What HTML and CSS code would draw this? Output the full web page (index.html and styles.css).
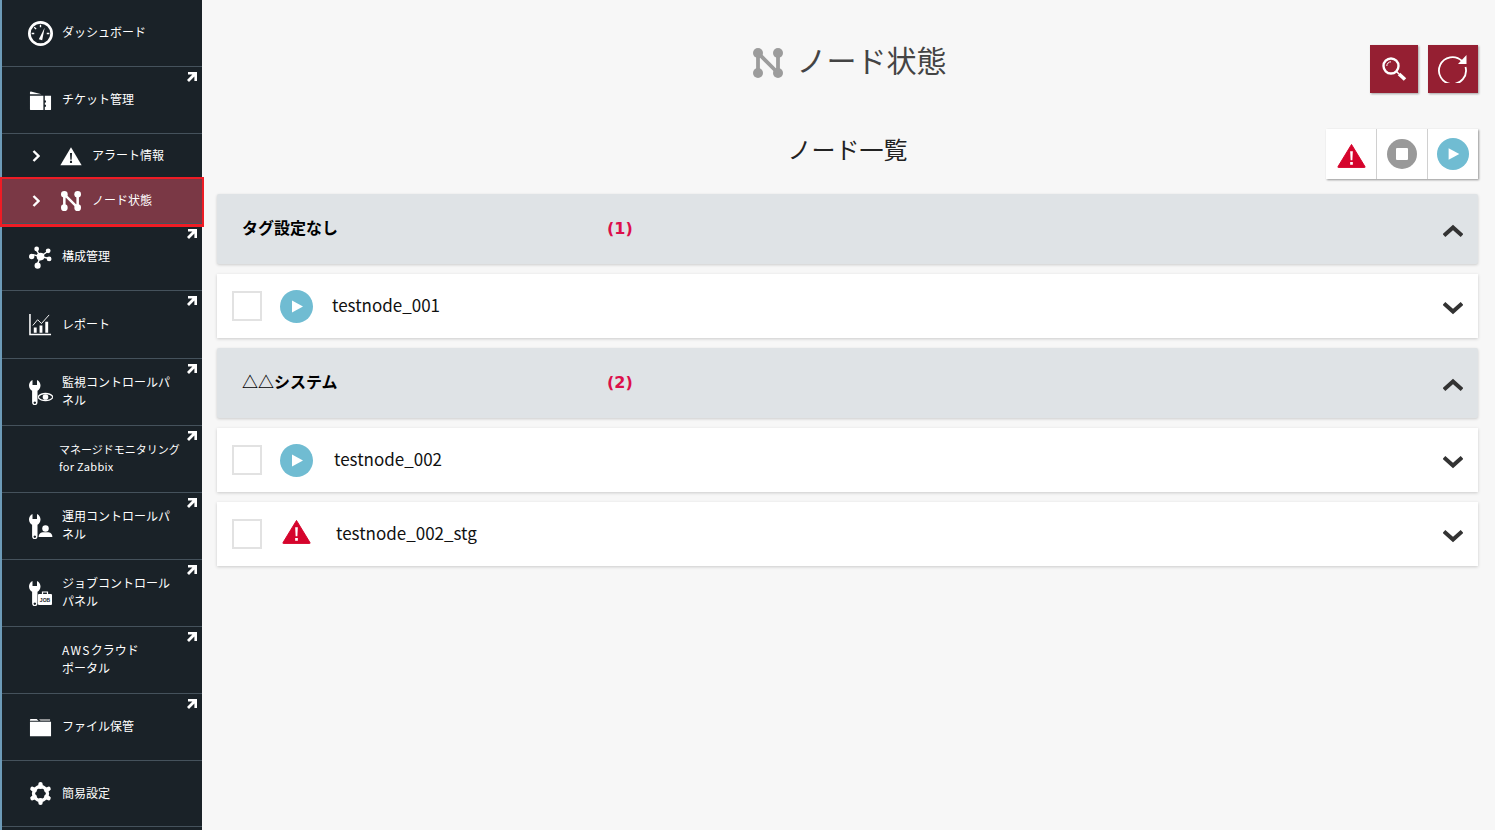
FILE: index.html
```html
<!DOCTYPE html>
<html lang="ja">
<head>
  <meta charset="UTF-8">
  <title>ノード状態</title>
  <meta name="viewport" content="width=device-width, initial-scale=1">
  <link rel="stylesheet" href="styles.css">
</head>
<body>
  <svg class="defs" width="0" height="0">
    <symbol id="ext" viewBox="0 0 10 10"><path d="M1 0h9v9H7.400V4.600L2 10 0 8 5.400 2.600H1z" fill="#fff"/></symbol>
    <symbol id="nodes" viewBox="0 0 30 30">
      <path d="M5 5V25M5 5 25 25M25 5V25" stroke="currentColor" stroke-width="3.800" fill="none"/>
      <circle cx="5" cy="5" r="5" fill="currentColor"/><circle cx="25" cy="5" r="5" fill="currentColor"/>
      <circle cx="5" cy="25" r="5" fill="currentColor"/><circle cx="25" cy="25" r="5" fill="currentColor"/>
    </symbol>
    <symbol id="wrench" viewBox="0 0 12 25"><path fill-rule="evenodd" fill="#fff" d="M3.500 0V5H8V0C10.500 1 11.500 3.500 11.500 5.500 11.500 8 10 10 8.500 10.800V22.500a2.700 2.700 0 0 1-5.400 0V10.800C1.500 10 0 8 0 5.500 0 3.500 1 1 3.500 0ZM5.800 21.500a1.200 1.200 0 1 0 .01 0Z"/></symbol>
    <symbol id="warn" viewBox="0 0 30 26"><path d="M15 1.500 29 24.500a.8.8 0 0 1-.7 1.200H1.700a.8.8 0 0 1-.7-1.200Z" fill="#d5042c" stroke="#d5042c" stroke-linejoin="round"/><path d="M13.600 8.500h2.800l-.5 9.500h-1.800zM13.600 19.700h2.800v3h-2.800z" fill="#fff"/></symbol>
    <symbol id="play" viewBox="0 0 33 33"><circle cx="16.500" cy="16.500" r="16.500" fill="#70bcd2"/><path d="M12 10.500 23 16.500 12 22.500Z" fill="#fff"/></symbol>
    <symbol id="up" viewBox="0 0 20 13"><path d="M1 11.500 10 3.500l9 8" fill="none" stroke="#333" stroke-width="4"/></symbol>
    <symbol id="down" viewBox="0 0 20 13"><path d="M1 1.500 10 9.500l9-8" fill="none" stroke="#333" stroke-width="4"/></symbol>
    <symbol id="chev" viewBox="0 0 8 12"><path d="M1.500 1 6.500 6l-5 5" fill="none" stroke="#fff" stroke-width="2.400"/></symbol>
  </svg>

  <nav class="sidebar">
    <a class="menu-item">
      <svg class="menu-icon gauge" viewBox="0 0 24 24"><circle cx="12" cy="12" r="10.700" fill="none" stroke="#fff" stroke-width="2.600"/><path d="M12 3.500v2.500M3.500 12H6M20.500 12H18M6 6l1.800 1.800" stroke="#fff" stroke-width="1.300"/><path d="M16 6.500 13.600 18.500 10.400 17.600Z" fill="#fff"/></svg>
      <span class="menu-text">ダッシュボード</span>
    </a>
    <a class="menu-item">
      <svg class="ext"><use href="#ext"/></svg>
      <svg class="menu-icon" viewBox="0 0 24 24"><path d="M1 6V3.500a1 1 0 0 1 1-1L13 5.500H1ZM1 7h14v15H2a1 1 0 0 1-1-1ZM16.500 7H23v14a1 1 0 0 1-1 1h-5.500v-3.500h1.200v-2h-1.200v-2.500h1.200v-2h-1.200Z" fill="#fff"/></svg>
      <span class="menu-text">チケット管理</span>
    </a>
    <a class="menu-item sub">
      <svg class="sub-chev"><use href="#chev"/></svg>
      <svg class="sub-icon" viewBox="0 0 30 26"><path d="M15 1 29.500 25.500H.5Z" fill="#fff"/><path d="M13.600 9h2.800l-.5 9h-1.800zM13.600 19.500h2.800v3h-2.800z" fill="#1a2228"/></svg>
      <span class="menu-text">アラート情報</span>
    </a>
    <a class="menu-item sub active">
      <svg class="sub-chev"><use href="#chev"/></svg>
      <svg class="sub-icon node-icon"><use href="#nodes"/></svg>
      <span class="menu-text">ノード状態</span>
    </a>
    <a class="menu-item">
      <svg class="ext"><use href="#ext"/></svg>
      <svg class="menu-icon" viewBox="0 0 24 24"><path d="M12 11 4 9M12 11 19 6M12 11 21 13M12 11 8 21M12 11 7 3" stroke="#fff" stroke-width="1.500"/><circle cx="12" cy="11" r="4" fill="#fff"/><circle cx="2.800" cy="11" r="2.800" fill="#fff"/><circle cx="20" cy="5" r="2.500" fill="#fff"/><circle cx="21" cy="13.500" r="2.500" fill="#fff"/><circle cx="9" cy="20.500" r="3.200" fill="#fff"/><circle cx="8" cy="3" r="2.500" fill="#fff"/></svg>
      <span class="menu-text">構成管理</span>
    </a>
    <a class="menu-item tall">
      <svg class="ext"><use href="#ext"/></svg>
      <svg class="menu-icon" viewBox="0 0 24 24"><path d="M1 1v21.500h22" fill="none" stroke="#fff" stroke-width="1.600"/><path d="M4 13 9 7l4 4 8-9" fill="none" stroke="#fff" stroke-width="1"/><path d="M5 15h3v5.500H5zM11 13h3v7.500h-3zM17 9h3v11.500h-3z" fill="#fff"/></svg>
      <span class="menu-text">レポート</span>
    </a>
    <a class="menu-item">
      <svg class="ext"><use href="#ext"/></svg>
      <span class="menu-icon tool-icon">
        <svg class="tool-wrench"><use href="#wrench"/></svg>
        <svg class="tool-badge" viewBox="0 0 16 12"><path d="M0 6C3 1 13 1 16 6 13 11 3 11 0 6Z" fill="#1a2228" stroke="#1a2228" stroke-width="3"/><path d="M0 6C3 1 13 1 16 6 13 11 3 11 0 6Z" fill="#1a2228" stroke="#fff" stroke-width="1.400"/><circle cx="8" cy="6" r="3" fill="#fff"/></svg>
      </span>
      <span class="menu-text">監視コントロールパネル</span>
    </a>
    <a class="menu-item no-icon">
      <svg class="ext"><use href="#ext"/></svg>
      <span class="menu-text small">マネージドモニタリング<br><span class="latin-sm">for Zabbix</span></span>
    </a>
    <a class="menu-item">
      <svg class="ext"><use href="#ext"/></svg>
      <span class="menu-icon tool-icon">
        <svg class="tool-wrench"><use href="#wrench"/></svg>
        <svg class="tool-badge" viewBox="0 0 16 14"><circle cx="8" cy="4" r="3.800" fill="#fff"/><path d="M0 14c0-4 3-5.500 5.500-5.500h5c2.500 0 5.500 1.500 5.500 5.500Z" fill="#fff"/></svg>
      </span>
      <span class="menu-text">運用コントロールパネル</span>
    </a>
    <a class="menu-item">
      <svg class="ext"><use href="#ext"/></svg>
      <span class="menu-icon tool-icon">
        <svg class="tool-wrench"><use href="#wrench"/></svg>
        <svg class="tool-badge job" viewBox="0 0 14 14"><path d="M4.500 3V1h5v2" fill="none" stroke="#fff" stroke-width="1.200"/><rect y="3" width="14" height="11" rx="1" fill="#fff"/><text x="7" y="11" text-anchor="middle" class="job-text">JOB</text></svg>
      </span>
      <span class="menu-text">ジョブコントロールパネル</span>
    </a>
    <a class="menu-item">
      <svg class="ext"><use href="#ext"/></svg>
      <span class="menu-icon"></span>
      <span class="menu-text"><span class="latin-aws">AWS</span>クラウド<br>ポータル</span>
    </a>
    <a class="menu-item">
      <svg class="ext"><use href="#ext"/></svg>
      <svg class="menu-icon" viewBox="0 0 24 24"><path d="M1 4a1 1 0 0 1 1-1h6l2 2H1ZM1 6h22v15H1Z" fill="#fff"/><path d="M10.500 3.500h11.500v1.500H12Z" fill="#bbb"/></svg>
      <span class="menu-text">ファイル保管</span>
    </a>
    <a class="menu-item short">
      <svg class="menu-icon" viewBox="0 0 24 24">
        <g stroke="#fff" stroke-width="4.600" stroke-linecap="round"><path d="M12 2.300V5M12 19v2.700M3.600 7.200 6 8.500M18 15.500l2.400 1.300M3.600 16.800 6 15.500M18 8.500l2.400-1.300"/></g>
        <circle cx="12" cy="12" r="7.300" fill="none" stroke="#fff" stroke-width="3.400"/>
      </svg>
      <span class="menu-text">簡易設定</span>
    </a>
  </nav>

  <main class="content">
    <header class="page-head">
      <div></div>
      <h1 class="page-title"><svg class="title-icon"><use href="#nodes"/></svg>ノード状態</h1>
      <div class="head-btns">
        <button class="red-btn search-btn" type="button">
          <svg width="26" height="26" viewBox="0 0 26 26"><circle cx="10" cy="10" r="7.500" fill="none" stroke="#fff" stroke-width="2.400"/><path d="M5.800 10A4.200 4.200 0 0 1 10 5.800" fill="none" stroke="#fff"/><path d="M15.500 15.500 18 18" stroke="#fff" stroke-width="1.600"/><path d="M18 18 24 23.500" stroke="#fff" stroke-width="3.600"/></svg>
        </button>
        <button class="red-btn reload-btn" type="button">
          <svg class="reload-icon" width="32" height="32" viewBox="0 0 32 32"><path d="M26 10A13.500 13.500 0 1 0 29.500 16" fill="none" stroke="#fff" stroke-width="1.800"/><path d="M30.500 4V13H22Z" fill="#fff"/></svg>
        </button>
      </div>
    </header>

    <section class="list-head">
      <div></div>
      <h2 class="list-title">ノード一覧</h2>
      <div class="filter-group">
        <button class="filter-btn" type="button"><svg class="warn-lg"><use href="#warn"/></svg></button>
        <button class="filter-btn" type="button">
          <svg width="30" height="30" viewBox="0 0 30 30"><circle cx="15" cy="15" r="15" fill="#999"/><rect x="9" y="9" width="12" height="12" rx="1" fill="#fff"/></svg>
        </button>
        <button class="filter-btn" type="button"><svg class="play-md"><use href="#play"/></svg></button>
      </div>
    </section>

    <div class="tag-head">
      <span class="tag-name">タグ設定なし</span>
      <span class="tag-count">(1)</span>
      <svg class="chevron"><use href="#up"/></svg>
    </div>
    <div class="node-row">
      <span class="check"></span>
      <svg class="status-play"><use href="#play"/></svg>
      <span class="node-name">testnode_001</span>
      <svg class="chevron"><use href="#down"/></svg>
    </div>

    <div class="tag-head">
      <span class="tag-name">△△システム</span>
      <span class="tag-count">(2)</span>
      <svg class="chevron"><use href="#up"/></svg>
    </div>
    <div class="node-row">
      <span class="check"></span>
      <svg class="status-play"><use href="#play"/></svg>
      <span class="node-name name-2">testnode_002</span>
      <svg class="chevron"><use href="#down"/></svg>
    </div>
    <div class="node-row">
      <span class="check"></span>
      <svg class="status-warn"><use href="#warn"/></svg>
      <span class="node-name name-3">testnode_002_stg</span>
      <svg class="chevron"><use href="#down"/></svg>
    </div>
  </main>
</body>
</html>
```

FILE: styles.css
```css
html, body { height: 100%; }
body {
  margin: 0; display: flex; overflow: hidden; background: #f7f7f7;
  font-family: "Noto Sans CJK JP", "Noto Sans", sans-serif; color: #111;
}
.defs { position: absolute; }

/* side menu */
.sidebar {
  width: 200px; min-height: 830px; flex: none; background: #1a2228;
  border-left: 2px solid #6d9bb8; color: #fff; font-size: 12px;
}
.menu-item {
  display: flex; align-items: center; height: 66px;
  border-bottom: 1px solid #45525c; padding-left: 27px; position: relative;
}
.menu-item.tall { height: 67px; }
.menu-item.short { height: 65px; }
.menu-icon { width: 23px; height: 23px; flex: none; margin-right: 10px; }
.menu-icon.gauge { width: 25px; height: 25px; margin: 0 9px 0 -1px; }
.menu-text { width: 110px; line-height: 18px; padding-bottom: 2px; }
.menu-text.small { width: 125px; font-size: 11px; line-height: 17px; }
.latin-sm { letter-spacing: .3px; }
.latin-aws { letter-spacing: 1.3px; }
.no-icon { padding-left: 57px; }
.ext { position: absolute; top: 5px; right: 5px; width: 10px; height: 10px; }

.sub { height: 44px; padding-left: 30px; }
.sub-chev { width: 8px; height: 12px; flex: none; margin-right: 20px; }
.sub-icon { width: 22px; height: 20px; flex: none; margin-right: 10px; }
.node-icon { color: #fff; }
.active { background: #7a3845; z-index: 1; box-shadow: 0 2px 0 #7a3845; }
.active::after {
  content: ""; position: absolute; top: -2px; left: -2px; right: -2px; bottom: -4px;
  border: 2px solid #ee1c25; border-bottom-width: 3px;
}

.tool-icon { display: flex; position: relative; height: 25px; }
.tool-wrench { width: 12px; height: 25px; flex: none; }
.tool-badge { position: absolute; right: -1px; bottom: 2px; width: 15px; height: 12px; }
.tool-badge.job { width: 14px; height: 14px; right: 0; bottom: 1px; }
.job-text { font: bold 5px "Liberation Sans", sans-serif; fill: #1a2228; }

/* main area */
.content { flex: 1; padding: 0 17px 0 15px; min-width: 0; }
.page-head, .list-head { display: grid; grid-template-columns: 1fr auto 1fr; }
.page-head { padding-top: 45px; height: 48px; margin-bottom: 36px; }
.list-head { height: 50px; margin-bottom: 15px; align-items: center; }
.page-title {
  margin: -8px 0 0; padding-left: 4px; font-size: 30px; font-weight: 400; color: #444; line-height: 44px;
  display: flex; align-items: center; align-self: start;
}
.title-icon { width: 30px; height: 30px; color: #9c9c9c; margin: 8px 14px 0 0; }
.list-title { margin: 0; font-size: 24px; font-weight: 400; color: #222; line-height: 40px; padding-bottom: 10px; }
.head-btns { display: flex; justify-content: flex-end; gap: 10px; }
.red-btn {
  height: 48px; border: 0; padding: 0; background: #951f32;
  display: flex; align-items: center; justify-content: center;
  box-shadow: 1px 1px 2px rgba(0, 0, 0, .35);
}
.search-btn { width: 48px; }
.reload-btn { width: 50px; }
.reload-icon { margin: 0 2px 4px 0; }
.filter-group {
  justify-self: end; display: flex; background: #fff;
  box-shadow: 1px 1px 2px rgba(0, 0, 0, .4);
}
.filter-btn {
  width: 51px; height: 50px; padding: 0; border: 0; background: none;
  border-left: 1px solid #d0d0d0;
  display: flex; align-items: center; justify-content: center;
}
.filter-btn:first-child { border-left: 0; width: 50px; }
.warn-lg { width: 29px; height: 25px; margin-top: 3px; }
.play-md { width: 32px; height: 32px; margin-bottom: 1px; }

.tag-head, .node-row {
  display: flex; align-items: center; padding-right: 15px;
  box-shadow: 0 1px 3px rgba(0, 0, 0, .18);
}
.tag-head {
  height: 70px; background: #dfe3e6; padding-left: 25px; margin-bottom: 10px;
  border-radius: 2px; font-size: 16px; font-weight: 700; color: #000;
}
.tag-name { width: 365px; flex: none; padding-bottom: 4px; }
.tag-count { color: #dc0f4b; font-family: "DejaVu Sans", sans-serif; font-size: 16px; padding-bottom: 2px; }
.chevron { width: 20px; height: 13px; margin: 5px 0 0 auto; flex: none; }
.tag-head .chevron { margin-top: 3px; }
.node-row { height: 64px; background: #fff; padding-left: 15px; margin-bottom: 10px; font-size: 17px; }
.check {
  width: 26px; height: 26px; border: 2px solid #e2e2e2; flex: none;
  margin-right: 18px;
}
.status-play { width: 33px; height: 33px; flex: none; }
.status-warn { width: 29px; height: 25px; flex: none; margin: 0 0 6px 2px; }
.node-name { margin-left: 19px; color: #111; padding-bottom: 4px; }
.name-2 { margin-left: 21px; }
.name-3 { margin-left: 25px; }
```
